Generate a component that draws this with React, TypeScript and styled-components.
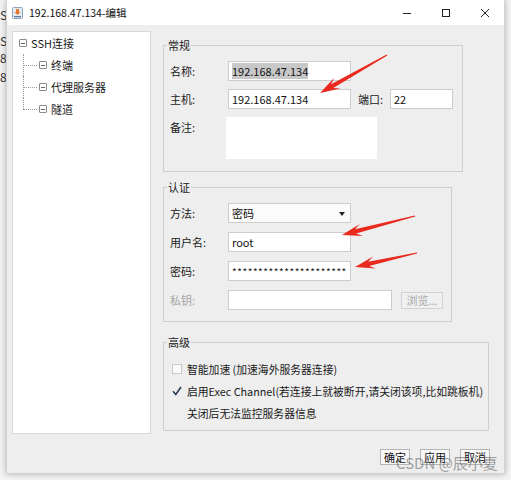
import React from 'react';
import styled, { createGlobalStyle } from 'styled-components';

const FONT = `"Noto Sans CJK SC", "Noto Sans", sans-serif`;

const Global = createGlobalStyle`
  html, body { margin: 0; padding: 0; background: #f3f3f3; }
  body { font-family: ${FONT}; font-size: 11px; color: #1f1f1f; }
  * { box-sizing: border-box; }
`;

const Desktop = styled.div`
  position: relative;
  width: 511px;
  height: 480px;
  overflow: hidden;
  display: flex;
  align-items: flex-start;
  background: #f3f3f3;
`;

const DesktopStrip = styled.div`
  width: 6px;
  flex: none;
  overflow: hidden;
  display: flex;
  flex-direction: column;
  font-size: 12px;
  line-height: 14px;
  color: #333;
  white-space: nowrap;
`;

const StripLine = styled.span<{ $gap: number }>`
  margin-top: ${(p) => p.$gap}px;
`;

const Window = styled.div`
  width: 499px;
  height: 474px;
  flex: none;
  display: flex;
  flex-direction: column;
  background: #eeeeee;
  border: 1px solid #d2d2d2;
  border-top: none;
  box-shadow: 0 0 6px rgba(0, 0, 0, 0.28);
`;

const TitleBar = styled.div`
  height: 25px;
  flex: none;
  display: flex;
  align-items: center;
  background: #ffffff;
  padding-left: 5px;
`;

const TitleText = styled.span`
  margin-left: 6px;
  font-size: 10.5px;
  color: #111;
  flex: 1;
`;

const ControlButton = styled.div`
  width: 39px;
  height: 25px;
  display: flex;
  align-items: center;
  justify-content: center;
`;

const Body = styled.div`
  flex: 1;
  display: flex;
  flex-direction: column;
  padding: 6px 14px 0 5px;
`;

const Main = styled.div`
  height: 403px;
  display: flex;
  gap: 12px;
`;

const TreePanel = styled.div`
  width: 139px;
  height: 403px;
  flex: none;
  background: #ffffff;
  border: 1px solid #d8d8d8;
`;

const TreeRow = styled.div<{ $child?: boolean; $last?: boolean }>`
  position: relative;
  height: 22px;
  display: flex;
  align-items: center;
  gap: 4px;
  padding-left: ${(p) => (p.$child ? 26 : 6)}px;
  color: #1a1a1a;
  ${(p) =>
    p.$child &&
    `
    &::before {
      content: '';
      position: absolute;
      left: 10px;
      top: 0;
      height: ${p.$last ? '50%' : '100%'};
      border-left: 1px dotted #9a9a9a;
    }
    &::after {
      content: '';
      position: absolute;
      left: 10px;
      top: 50%;
      width: 14px;
      border-top: 1px dotted #9a9a9a;
    }
  `}
`;

const Expander = styled.span`
  position: relative;
  width: 8px;
  height: 8px;
  flex: none;
  border: 1px solid #8a8a8a;
  border-radius: 1px;
  &::after {
    content: '';
    position: absolute;
    left: 1px;
    right: 1px;
    top: 2.5px;
    border-top: 1px solid #666;
  }
`;

const RightColumn = styled.div`
  display: flex;
  flex-direction: column;
`;

const Group = styled.fieldset<{ $w: number; $mt: number; $pb: number }>`
  width: ${(p) => p.$w}px;
  margin: ${(p) => p.$mt}px 0 0 0;
  padding: 9px 6px ${(p) => p.$pb}px 6px;
  border: 1px solid #cfcfcf;
  display: flex;
  flex-direction: column;
  gap: 8px;
  min-width: 0;
`;

const GroupTitle = styled.legend`
  margin-left: -3px;
  padding: 0 1px;
  font-size: 11px;
  line-height: 14px;
  color: #1a1a1a;
`;

const Rows = styled.div<{ $gap: number }>`
  display: flex;
  flex-direction: column;
  gap: ${(p) => p.$gap}px;
`;

const Row = styled.div<{ $top?: boolean }>`
  display: flex;
  align-items: ${(p) => (p.$top ? 'flex-start' : 'center')};
`;

const Label = styled.span<{ $w?: number; $disabled?: boolean; $ml?: number; $pt?: number }>`
  width: ${(p) => p.$w ?? 58}px;
  flex: none;
  margin-left: ${(p) => p.$ml ?? 0}px;
  padding-top: ${(p) => p.$pt ?? 0}px;
  color: ${(p) => (p.$disabled ? '#a5a5a5' : '#1a1a1a')};
`;

const Field = styled.div<{ $w: number; $h?: number; $ml?: number; $select?: boolean }>`
  position: relative;
  width: ${(p) => p.$w}px;
  height: ${(p) => p.$h ?? 20}px;
  flex: none;
  margin-left: ${(p) => p.$ml ?? 0}px;
  padding-left: 3px;
  background: ${(p) => (p.$select ? '#fbfbfb' : '#ffffff')};
  border: 1px solid ${(p) => (p.$h ? '#ffffff' : '#cdcdcd')};
  line-height: 18px;
  font-size: 11px;
  color: #111;
  white-space: nowrap;
  overflow: hidden;
`;

const Selected = styled.span`
  background: #c8c8c8;
`;

const Password = styled.span`
  font-size: 10px;
  letter-spacing: 0.55px;
  color: #222;
`;

const DropArrow = styled.span`
  position: absolute;
  right: 5px;
  top: 8px;
  width: 0;
  height: 0;
  border-left: 3.5px solid transparent;
  border-right: 3.5px solid transparent;
  border-top: 4px solid #222;
`;

const SmallButton = styled.div<{ $disabled?: boolean; $w: number; $ml?: number }>`
  width: ${(p) => p.$w}px;
  height: ${(p) => (p.$disabled ? 17 : 16)}px;
  margin-left: ${(p) => p.$ml ?? 0}px;
  display: flex;
  align-items: center;
  justify-content: center;
  font-size: 11px;
  color: ${(p) => (p.$disabled ? '#a8a8a8' : '#111')};
  background: ${(p) => (p.$disabled ? '#f0f0f0' : '#f7f7f7')};
  border: 1px solid ${(p) => (p.$disabled ? '#d2d2d2' : '#b5b5b5')};
`;

const CheckRow = styled.div<{ $indent?: number }>`
  height: 22px;
  display: flex;
  align-items: center;
  gap: 5px;
  padding-left: ${(p) => p.$indent ?? 2}px;
  font-size: 10.8px;
  color: #1a1a1a;
  white-space: nowrap;
`;

const CheckBox = styled.span`
  width: 10px;
  height: 10px;
  flex: none;
  border: 1px solid #c9c9c9;
  background: #fbfbfb;
`;

const CheckMark = styled.svg`
  width: 10px;
  height: 10px;
  flex: none;
`;

const Footer = styled.div`
  margin-top: 15px;
  display: flex;
  justify-content: flex-end;
  gap: 10px;
`;

const Watermark = styled.span`
  position: absolute;
  left: 396px;
  top: 453px;
  font-size: 15px;
  line-height: 20px;
  color: rgba(105, 105, 105, 0.6);
  pointer-events: none;
  white-space: nowrap;
`;

const Overlay = styled.svg`
  position: absolute;
  left: 0;
  top: 0;
  width: 511px;
  height: 480px;
  pointer-events: none;
`;

function arrowPoints(tx: number, ty: number, px: number, py: number) {
  const dx = px - tx;
  const dy = py - ty;
  const len = Math.hypot(dx, dy);
  const ux = dx / len;
  const uy = dy / len;
  const nx = -uy;
  const ny = ux;
  const pt = (d: number, w: number) =>
    `${(px - ux * d + nx * w).toFixed(1)},${(py - uy * d + ny * w).toFixed(1)}`;
  return [
    `${(tx + nx * 0.6).toFixed(1)},${(ty + ny * 0.6).toFixed(1)}`,
    pt(14, 2.2),
    pt(20, 6.2),
    `${px},${py}`,
    pt(20, -6.2),
    pt(14, -2.2),
    `${(tx - nx * 0.6).toFixed(1)},${(ty - ny * 0.6).toFixed(1)}`,
  ].join(' ');
}

const arrows = [
  [387, 55, 320, 93],
  [415, 216, 342, 235],
  [417, 253, 355, 267],
];

const AppIcon = () => (
  <svg width="11" height="12" viewBox="0 0 11 12">
    <rect x="0.5" y="0.5" width="10" height="11" rx="1" fill="#e6ebf2" stroke="#8ea3bb" />
    <path d="M4 2h3v3h1.5L5.5 8 2.5 5H4z" fill="#e2772e" />
    <rect x="2" y="9" width="7" height="1.3" fill="#5b7fa8" />
  </svg>
);

export default function App() {
  return (
    <>
      <Global />
      <Desktop>
        <DesktopStrip>
          <StripLine $gap={8}>Sl</StripLine>
          <StripLine $gap={12}>Sl</StripLine>
          <StripLine $gap={3}>8.</StripLine>
          <StripLine $gap={5}>8.</StripLine>
        </DesktopStrip>
        <Window>
          <TitleBar>
            <AppIcon />
            <TitleText>192.168.47.134-编辑</TitleText>
            <ControlButton>
              <svg width="10" height="10" viewBox="0 0 10 10">
                <path d="M1 5.5h8" stroke="#222" strokeWidth="1" />
              </svg>
            </ControlButton>
            <ControlButton>
              <svg width="10" height="10" viewBox="0 0 10 10">
                <rect x="1.5" y="1.5" width="7" height="7" fill="none" stroke="#222" strokeWidth="1" />
              </svg>
            </ControlButton>
            <ControlButton>
              <svg width="10" height="10" viewBox="0 0 10 10">
                <path d="M1 1l8 8M9 1l-8 8" stroke="#222" strokeWidth="1" />
              </svg>
            </ControlButton>
          </TitleBar>
          <Body>
            <Main>
              <TreePanel>
                <TreeRow>
                  <Expander />
                  <span>SSH连接</span>
                </TreeRow>
                <TreeRow $child>
                  <Expander />
                  <span>终端</span>
                </TreeRow>
                <TreeRow $child>
                  <Expander />
                  <span>代理服务器</span>
                </TreeRow>
                <TreeRow $child $last>
                  <Expander />
                  <span>隧道</span>
                </TreeRow>
              </TreePanel>
              <RightColumn>
                <Group $w={300} $mt={7} $pb={12}>
                  <GroupTitle>常规</GroupTitle>
                  <Rows $gap={8}>
                    <Row>
                      <Label>名称:</Label>
                      <Field $w={123}>
                        <Selected>192.168.47.134</Selected>
                      </Field>
                    </Row>
                    <Row>
                      <Label>主机:</Label>
                      <Field $w={123}>192.168.47.134</Field>
                      <Label $w={32} $ml={7}>端口:</Label>
                      <Field $w={63}>22</Field>
                    </Row>
                    <Row $top>
                      <Label $pt={2}>备注:</Label>
                      <Field $w={151} $h={42} $ml={-2} />
                    </Row>
                  </Rows>
                </Group>
                <Group $w={289} $mt={8} $pb={11}>
                  <GroupTitle>认证</GroupTitle>
                  <Rows $gap={9}>
                    <Row>
                      <Label>方法:</Label>
                      <Field $w={123} $select>
                        密码
                        <DropArrow />
                      </Field>
                    </Row>
                    <Row>
                      <Label>用户名:</Label>
                      <Field $w={123}>root</Field>
                    </Row>
                    <Row>
                      <Label>密码:</Label>
                      <Field $w={123}>
                        <Password>**********************</Password>
                      </Field>
                    </Row>
                    <Row>
                      <Label $disabled>私钥:</Label>
                      <Field $w={164} />
                      <SmallButton $disabled $w={42} $ml={9}>
                        浏览...
                      </SmallButton>
                    </Row>
                  </Rows>
                </Group>
                <Group $w={326} $mt={13} $pb={6}>
                  <GroupTitle>高级</GroupTitle>
                  <Rows $gap={0}>
                    <CheckRow>
                      <CheckBox />
                      <span>智能加速 (加速海外服务器连接)</span>
                    </CheckRow>
                    <CheckRow>
                      <CheckMark viewBox="0 0 10 10">
                        <path d="M1 5.2l2.8 3.3L9 1" fill="none" stroke="#2b3b55" strokeWidth="1.6" />
                      </CheckMark>
                      <span>启用Exec Channel(若连接上就被断开,请关闭该项,比如跳板机)</span>
                    </CheckRow>
                    <CheckRow $indent={17}>
                      <span>关闭后无法监控服务器信息</span>
                    </CheckRow>
                  </Rows>
                </Group>
              </RightColumn>
            </Main>
            <Footer>
              <SmallButton $w={30}>确定</SmallButton>
              <SmallButton $w={30}>应用</SmallButton>
              <SmallButton $w={30}>取消</SmallButton>
            </Footer>
          </Body>
        </Window>
        <Watermark>CSDN @辰小夏</Watermark>
        <Overlay viewBox="0 0 511 480">
          {arrows.map(([tx, ty, px, py], i) => (
            <polygon key={i} points={arrowPoints(tx, ty, px, py)} fill="#ea2a1f" />
          ))}
        </Overlay>
      </Desktop>
    </>
  );
}
